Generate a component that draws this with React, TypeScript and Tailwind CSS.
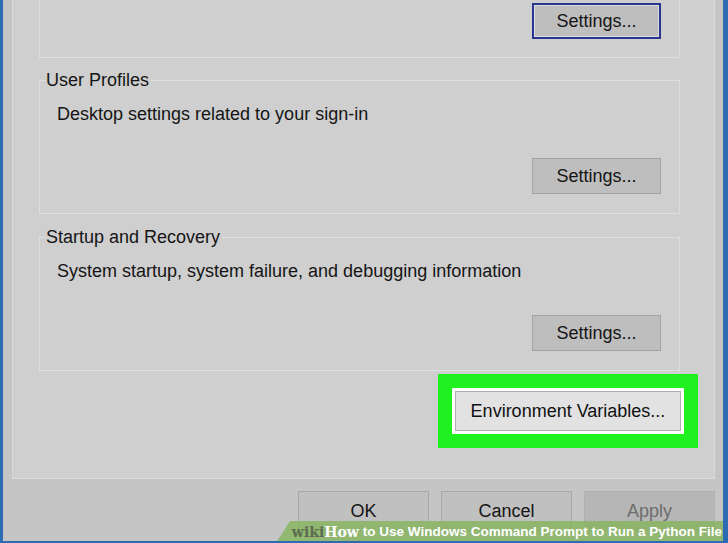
import type { ReactNode } from "react";

function Button({ children, focused, className = "" }: { children: ReactNode; focused?: boolean; className?: string }) {
  return (
    <button
      className={`h-[36px] w-[129px] text-[18px] leading-none text-[#151515] bg-[#bebebe] ${
        focused ? "border-2 border-[#2a3590] shadow-[inset_0_0_0_1px_#dcdcdc]" : "border border-[#a3a3a3]"
      } ${className}`}
    >
      {children}
    </button>
  );
}

function GroupBox({ title, text }: { title: string; text: string }) {
  return (
    <fieldset className="border border-[#dedede] mr-[18px]">
      <legend className="ml-[6px] pr-[2px] text-[18px] leading-[20px] text-[#151515]">{title}</legend>
      <div className="pl-[17px] pr-[18px] pb-[19px]">
        <p className="mt-[14px] text-[18px] leading-[20px] text-[#151515]">{text}</p>
        <div className="mt-[34px] flex justify-end">
          <Button>Settings...</Button>
        </div>
      </div>
    </fieldset>
  );
}

export default function App() {
  return (
    <div className="relative w-[728px] h-[543px] overflow-hidden bg-[#c5c5c5] border-l-[3px] border-r-[5px] border-b-[2px] border-[#2d6cb2] pl-[9px] pr-[8px] font-['Liberation_Sans',Arial,sans-serif]">
      {/* tab page */}
      <div className="bg-[#cfcfcf] border-x border-b border-[#dadada] pl-[26px] pr-[16px] pb-[30px] flex flex-col">
        <div className="h-[58px] border-x border-b border-[#dedede] mr-[18px] pt-[3px] pr-[18px] flex justify-end items-start">
          <Button focused>Settings...</Button>
        </div>

        <div className="mt-[12px]">
          <GroupBox title="User Profiles" text="Desktop settings related to your sign-in" />
        </div>
        <div className="mt-[13px]">
          <GroupBox title="Startup and Recovery" text="System startup, system failure, and debugging information" />
        </div>

        <div className="mt-[3px] self-end w-[260px] bg-[#1ff01f] p-[14px]">
          <div className="bg-white p-[3px]">
            <button className="w-full h-[40px] bg-[#e2e2e2] border border-[#adadad] text-[18px] leading-none text-[#111]">
              Environment Variables...
            </button>
          </div>
        </div>
      </div>

      {/* dialog buttons */}
      <div className="mt-[12px] flex justify-end gap-[12px]">
        <button className="w-[131px] h-[40px] bg-[#c0c0c0] border border-[#a8a8a8] text-[18px] text-[#151515]">OK</button>
        <button className="w-[131px] h-[40px] bg-[#c0c0c0] border border-[#a8a8a8] text-[18px] text-[#151515]">Cancel</button>
        <button className="w-[131px] h-[40px] bg-[#b6b6b6] border border-[#b0b0b0] text-[18px] text-[#6c6c6c]">Apply</button>
      </div>

      {/* wikiHow caption */}
      <div className="absolute right-[-5px] bottom-[-2px] w-[452px] h-[22px] bg-[rgba(135,180,98,0.85)] [clip-path:polygon(14px_0,100%_0,100%_100%,0_100%)] flex items-center justify-end pr-[6px] whitespace-nowrap">
        <span className="font-['DejaVu_Serif',serif] font-bold text-[14px] text-[#5d6c50]">wiki</span>
        <span className="font-['DejaVu_Serif',serif] font-bold text-[14px] text-white mr-[4px]">How</span>
        <span className="font-['Liberation_Sans',Arial,sans-serif] font-bold text-[13.5px] text-white">
          to Use Windows Command Prompt to Run a Python File
        </span>
      </div>
    </div>
  );
}
